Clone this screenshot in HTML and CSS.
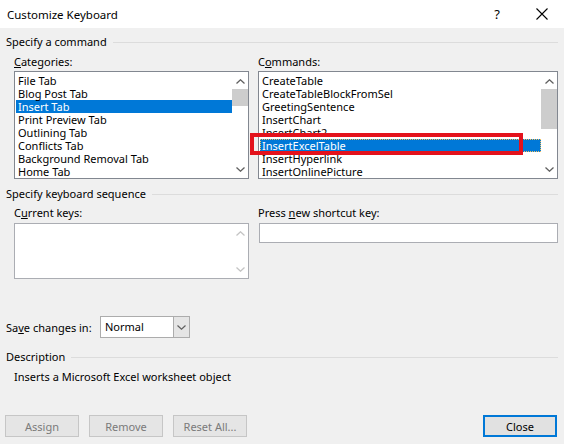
FILE: index.html
```html
<!DOCTYPE html>
<html>
<head>
<meta charset="utf-8">
<link rel="stylesheet" href="styles.css">
</head>
<body>
<div class="dialog">
  <div class="titlebar">
    <span class="title">Customize Keyboard</span>
    <span class="tb-help">?</span>
    <span class="tb-close"><svg width="12" height="12" viewBox="0 0 12 12"><path d="M0.5 0.5 L11.5 11.5 M11.5 0.5 L0.5 11.5" stroke="#000" stroke-width="1.1" fill="none"/></svg></span>
  </div>
  <div class="content">
    <div class="group-head"><span>Specify a command</span><i></i></div>
    <div class="cols">
      <div class="col-left">
        <div class="label"><u>C</u>ategories:</div>
        <div class="listbox">
          <div class="items">
            <div class="item">File Tab</div>
            <div class="item">Blog Post Tab</div>
            <div class="item sel">Insert Tab</div>
            <div class="item">Print Preview Tab</div>
            <div class="item">Outlining Tab</div>
            <div class="item">Conflicts Tab</div>
            <div class="item">Background Removal Tab</div>
            <div class="item">Home Tab</div>
          </div>
          <div class="vscroll">
            <svg class="arr" width="9" height="5" viewBox="0 0 9 5"><path d="M0.5 4.5 L4.5 0.8 L8.5 4.5" stroke="#606060" stroke-width="1.3" fill="none"/></svg>
            <div class="track"><div class="thumb thumb-cat"></div></div>
            <svg class="arr" width="9" height="5" viewBox="0 0 9 5"><path d="M0.5 0.5 L4.5 4.2 L8.5 0.5" stroke="#606060" stroke-width="1.3" fill="none"/></svg>
          </div>
        </div>
      </div>
      <div class="col-right">
        <div class="label">C<u>o</u>mmands:</div>
        <div class="listbox">
          <div class="items">
            <div class="item">CreateTable</div>
            <div class="item">CreateTableBlockFromSel</div>
            <div class="item">GreetingSentence</div>
            <div class="item">InsertChart</div>
            <div class="item">InsertChart2</div>
            <div class="item sel focus">InsertExcelTable</div>
            <div class="item">InsertHyperlink</div>
            <div class="item">InsertOnlinePicture</div>
          </div>
          <div class="vscroll">
            <svg class="arr" width="9" height="5" viewBox="0 0 9 5"><path d="M0.5 4.5 L4.5 0.8 L8.5 4.5" stroke="#606060" stroke-width="1.3" fill="none"/></svg>
            <div class="track"><div class="thumb thumb-cmd"></div></div>
            <svg class="arr" width="9" height="5" viewBox="0 0 9 5"><path d="M0.5 0.5 L4.5 4.2 L8.5 0.5" stroke="#606060" stroke-width="1.3" fill="none"/></svg>
          </div>
        </div>
        <div class="highlight-box"></div>
      </div>
    </div>

    <div class="group-head gh2"><span>Specify keyboard sequence</span><i></i></div>
    <div class="cols cols2">
      <div class="col-left">
        <div class="label">C<u>u</u>rrent keys:</div>
        <div class="keysbox">
          <div class="items"></div>
          <div class="vscroll disabled">
            <svg class="arr" width="9" height="5" viewBox="0 0 9 5"><path d="M0.5 4.5 L4.5 0.8 L8.5 4.5" stroke="#c4c4c4" stroke-width="1.3" fill="none"/></svg>
            <div class="track"></div>
            <svg class="arr" width="9" height="5" viewBox="0 0 9 5"><path d="M0.5 0.5 L4.5 4.2 L8.5 0.5" stroke="#c4c4c4" stroke-width="1.3" fill="none"/></svg>
          </div>
        </div>
      </div>
      <div class="col-right">
        <div class="label">Press <u>n</u>ew shortcut key:</div>
        <div class="textbox"></div>
      </div>
    </div>

    <div class="save-row">
      <span class="save-label">Sa<u>v</u>e changes in:</span>
      <div class="combo">
        <span class="combo-text">Normal</span>
        <span class="combo-btn"><svg width="9" height="5" viewBox="0 0 9 5"><path d="M0.5 0.5 L4.5 4.2 L8.5 0.5" stroke="#606060" stroke-width="1.2" fill="none"/></svg></span>
      </div>
    </div>

    <div class="group-head gh3"><span>Description</span><i></i></div>
    <div class="desc">Inserts a Microsoft Excel worksheet object</div>

    <div class="buttons">
      <button class="btn disabled">Assign</button>
      <button class="btn disabled">Remove</button>
      <button class="btn disabled">Reset All...</button>
      <span class="spacer"></span>
      <button class="btn default">Close</button>
    </div>
  </div>
</div>
</body>
</html>
```
FILE: styles.css
```css
* { box-sizing: border-box; }
html, body { margin: 0; padding: 0; }
body {
  width: 564px;
  height: 444px;
  overflow: hidden;
  background: #f0f0f0;
  font-family: "Noto Sans", "Open Sans", "Liberation Sans", sans-serif;
  font-size: 11px;
  color: #000;
}
u { text-decoration: underline; text-underline-offset: 1px; }
.dialog { width: 564px; height: 444px; }
.titlebar {
  height: 28px;
  background: #fff;
  display: flex;
  align-items: center;
  padding-left: 7px;
}
.title { flex: 1; font-size: 11.5px; }
.tb-help { width: 20px; font-size: 13px; margin-right: 29px; text-align: center; }
.tb-close { width: 12px; height: 12px; margin-right: 16px; display: flex; }
.content { padding: 0 6px 0 6px; }
.group-head {
  display: flex;
  align-items: center;
  height: 16px;
  line-height: 16px;
  margin-top: 6px;
}
.group-head span { white-space: nowrap; }
.group-head i {
  flex: 1;
  height: 1px;
  background: #dcdcdc;
  margin-left: 6px;
  margin-right: 0;
}
.gh2 { margin-top: 7px; }
.gh3 { margin-top: 11px; }
.cols {
  display: grid;
  grid-template-columns: 235px 300px;
  column-gap: 9px;
  padding-left: 8px;
  margin-top: 4px;
}
.col-right { position: relative; }
.label { height: 16px; line-height: 16px; margin-bottom: 1px; white-space: nowrap; }
.cols2 .label { margin-bottom: 2px; }
.cols2 { margin-top: 3px; }
.listbox {
  height: 108px;
  background: #fff;
  border: 1px solid #828790;
  display: flex;
  overflow: hidden;
}
.items { flex: 1; padding-top: 2px; overflow: hidden; }
.item {
  height: 13px;
  line-height: 13px;
  padding-left: 3px;
  white-space: nowrap;
}
.item.sel { background: #0078d7; color: #fff; margin-left: 1px; padding-left: 2px; }
.item.focus { outline: 1px dotted #f0c060; outline-offset: -1px; }
.vscroll {
  width: 16px;
  display: flex;
  flex-direction: column;
  align-items: center;
  background: #fff;
}
.vscroll .arr { flex: none; margin: 7px 0 5px; }
.vscroll .arr:last-child { margin: 5px 0 6px; }
.track { flex: 1; width: 100%; }
.thumb { width: 100%; background: #cdcdcd; }
.thumb-cat { height: 17px; }
.thumb-cmd { height: 40px; }
.highlight-box {
  position: absolute;
  left: -8px;
  top: 79px;
  width: 273px;
  height: 22px;
  border: 4px solid #e3121c;
}
.keysbox {
  height: 56px;
  background: #fff;
  border: 1px solid #abadb3;
  display: flex;
}
.textbox {
  height: 20px;
  margin-left: 1px;
  background: #fff;
  border: 1px solid #abadb3;
}
.save-row {
  display: flex;
  align-items: center;
  margin-top: 37px;
  height: 22px;
}
.save-label { width: 94px; white-space: nowrap; }
.combo {
  width: 90px;
  height: 22px;
  display: flex;
  border: 1px solid #acacac;
  background: #fff;
}
.combo-text { flex: 1; line-height: 20px; padding-left: 4px; }
.combo-btn {
  width: 16px;
  background: #e5e5e5;
  border-left: 1px solid #acacac;
  display: flex;
  align-items: center;
  justify-content: center;
}
.desc {
  margin-top: 4px;
  padding-left: 8px;
  height: 16px;
  line-height: 16px;
}
.buttons {
  display: flex;
  margin-top: 30px;
  padding-left: 0;
  gap: 10px;
  padding-right: 1px;
  margin-left: -1px;
}
.spacer { flex: 1; }
.btn {
  width: 74px;
  height: 22px;
  font: inherit;
  font-size: 11px;
  padding: 0;
  background: #e1e1e1;
  border: 1px solid #adadad;
  color: #000;
}
.btn.disabled { background: #e5e5e5; border-color: #c6c6c6; color: #7a7a7a; }
.btn.default { border: 2px solid #0078d7; }
```
